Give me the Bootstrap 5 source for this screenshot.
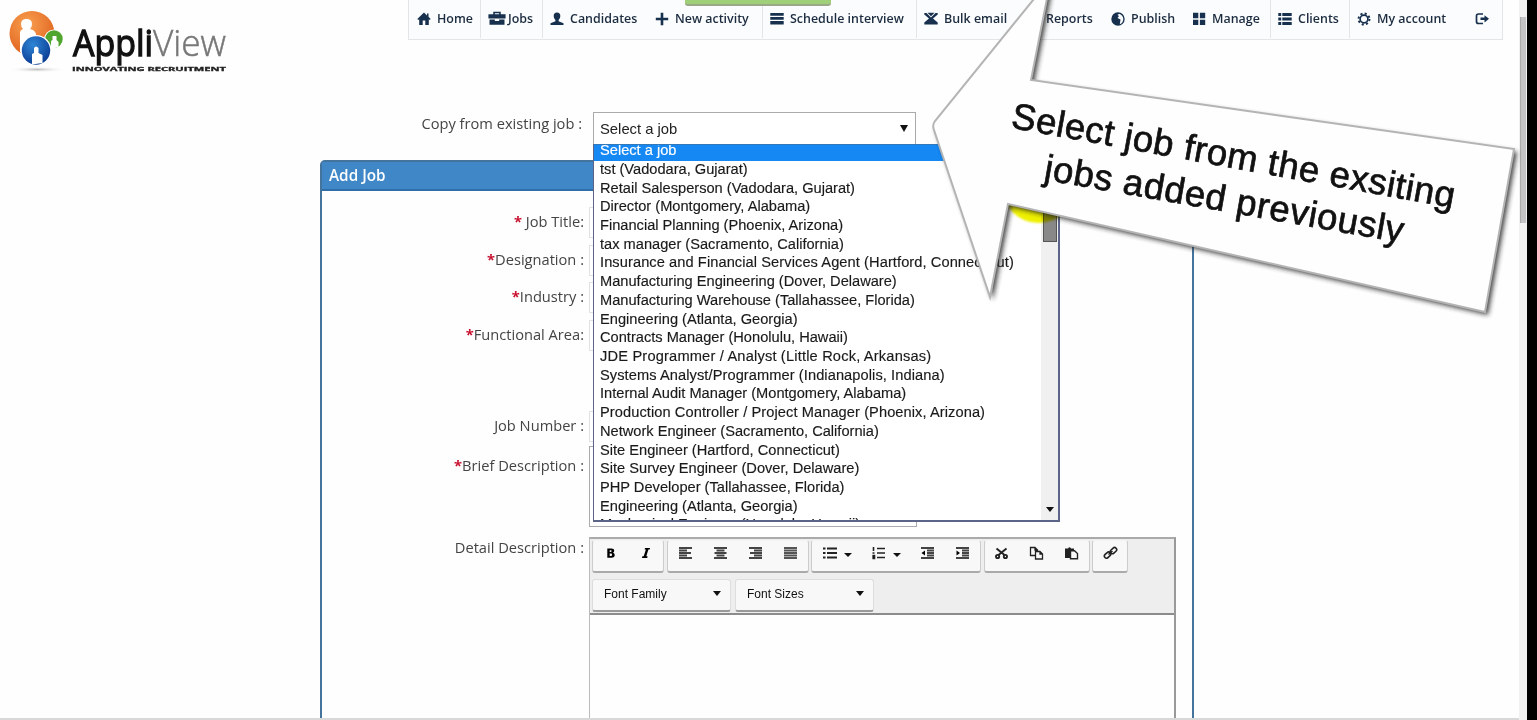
<!DOCTYPE html>
<html lang="en">
<head>
<meta charset="utf-8">
<title>AppliView - Add Job</title>
<meta name="viewport" content="width=device-width, initial-scale=1">
<link href="https://cdn.jsdelivr.net/npm/bootstrap@5.3.0/dist/css/bootstrap.min.css" rel="stylesheet">
<style>
body{height:720px;overflow:hidden;background:#fefefe;font-family:"Open Sans","Noto Sans",sans-serif;color:#333}
.page-area{width:1519px;height:720px;overflow:hidden;border-bottom:2px solid #d8d8d8}
.side-scroll{width:8px;background:#f1f1f1;padding:17px 1px 0}
.side-scroll i{display:block;height:206px;background:#c3c3c5;border-left:1px solid #aaa}
.side-edge{width:10px;background:#000}
.top-line{height:112px}
.main-menu{margin-left:408px;width:1095px;height:40px;background:#fbfcfd;border:1px solid #e3e5e8;border-top:0}
.main-menu a{display:flex;align-items:center;flex:none;height:38px;padding-left:7px;font-size:12.45px;font-weight:600;color:#1c2c40;text-decoration:none;white-space:nowrap;border-left:1px solid transparent}
.main-menu a svg{width:14px;height:14px;margin:-1px 6px 0 0;flex:none;fill:#16304d}
.main-menu a svg.broad{width:18px;height:15px;margin-right:2px}
.main-menu a.sep{border-left-color:#e3e5e8}
.brand{left:0;top:0}
.notice-bar{left:685px;top:0;width:146px;height:6px;background:#a0cf7a;border-bottom:2px solid #9aa887;border-radius:0 0 3px 3px}
.label-col{flex:none;text-align:right;font-size:14.65px;line-height:20px;color:#444;white-space:nowrap}
.label-col b{color:#c8102e}
.copy-row{height:48px}
.copy-row .label-col{width:582px;padding-top:1px}
.pick{margin-left:11px;width:323px;height:33px;border:1px solid #aaa;background:#fff;padding:0 7px 0 6px;font:14.8px "Liberation Sans",sans-serif;color:#222}
.arrow{width:0;height:0;border:4px solid transparent;border-top:7px solid #111;border-bottom:0}
.job-panel{margin-left:320px;width:874px;height:600px;border:2px solid #44749c;border-radius:5px 5px 0 0;background:#fefefe}
.job-head{height:29px;background:#3f87c7;border-bottom:2px solid #2f6ea8;color:#fff;font-size:15.3px;font-weight:600;line-height:26px;padding-left:7px}
.job-panel .label-col{width:262px}
.job-row{height:37.6px}
.job-field{margin-left:5px;width:328px;height:31px;border:1px solid #e2e2e2;background:#fff}
.brief{height:81px;border-color:#aaa}
.editor{margin-left:5px;width:587px;height:260px;border:2px solid #999;border-left:1px solid #bbb;border-top-color:#aaa}
.tools{height:76px;background:#eee;border-bottom:2px solid #8c8c8c;padding:1px 2px}
.tool-set{display:flex;height:33px;background:#f8f8f8;border:1px solid #ccc;border-bottom:2px solid #aaa;border-top-color:#f4f4f4;border-radius:3px;padding-bottom:5px}
.tool-set span{width:35px;display:flex;align-items:center;justify-content:center}
.tool-set span.wide{width:49px;gap:7px;padding-left:1px}
.tool-set svg{width:15px;height:14px}
.arrow.sm{border-width:4px;border-top-width:4.5px;border-bottom:0;margin-top:4px}
.font-pick{height:33px;background:#f8f8f8;border:1px solid #ddd;border-bottom:2px solid #999;border-radius:3px;padding:0 9px 2px 11px;font:12px "Liberation Sans",sans-serif;color:#111}
.font-pick .arrow{border-width:4.5px;border-top-width:5px;border-bottom:0}
.job-menu{left:593px;top:144px;width:467px;height:378px;border:1px solid #5c6488;border-right-width:2px;border-bottom-width:2px;border-top:1px solid #3478b8;background:#fff;overflow:hidden}
.job-menu ul{margin:-4px 0 0;width:446px;font:14.63px/18.72px "Liberation Sans",sans-serif;color:#1a1a1a;-webkit-text-stroke:.15px;flex:none}
.job-menu li{padding-left:6px;white-space:nowrap;height:18.72px}
.job-menu li.on{background:#1688f4;color:#fff;height:20px}
.job-menu li.on+li{margin-top:-1.2px}
.job-menu li.loose{letter-spacing:.08px}
.job-menu li.looser{letter-spacing:.18px}
.menu-scroll{width:17px;background:#f0f0f0;padding:0 2px}
.menu-scroll i{display:block;width:14px;height:80px;margin-top:17px;background:#888;border:1px solid #555}
.spot{left:1002px;top:150px;width:73px;height:73px;border-radius:50%;background:#eef000;mix-blend-mode:multiply;filter:blur(1px)}
.callout{left:900px;top:0}
</style>
</head>
<body class="position-relative">
<svg width="0" height="0" class="position-absolute">
<symbol id="home" viewBox="0 0 14 14"><path d="M7 .5 .3 7l1 1 .9-.8V13h3.500V8.500h2.600V13h3.500V7.200l.9.800 1-1L11.500 4.700V1.500H10v1.900z"/></symbol>
<symbol id="case" viewBox="0 0 16 14"><path d="M4.500 3V.8h7V3H16v4H0V3zm1.500 0h4V2H6zM1 8h5v1.300h4V8h5v4.800H1z"/></symbol>
<symbol id="user" viewBox="0 0 14 14"><path d="M7 .5c2.300 0 3.300 1.500 3.300 3.300S9.600 7 8.600 7.900v1.400l4.900 1.900V13H.5v-1.800l4.900-1.900V7.900C4.400 7 3.700 5.600 3.700 3.800S4.700.5 7 .5z"/></symbol>
<symbol id="plus" viewBox="0 0 14 14"><path d="M5.700.8h2.600v4.900h4.900v2.600H8.300v4.900H5.700V8.300H.8V5.700h4.900z"/></symbol>
<symbol id="rows" viewBox="0 0 14 14"><path d="M.3 1h13.400v2.700H.3zm0 4h13.400v2.700H.3zm0 4h13.400v3.500H.3z"/></symbol>
<symbol id="mail" viewBox="0 0 14 14"><path d="M.3 1h2.200L7 5.500 11.500 1h2.200v1.500L9 6.600l4.700 3.900v2H.3v-2L5 6.600.3 2.500zM3.500.8h7L7 4.200z"/></symbol>
<symbol id="chart" viewBox="0 0 14 14"><path d="M1 7h3v6H1zm5-4h3v10H6zm5-2h3v12h-3z"/></symbol>
<symbol id="globe" viewBox="0 0 14 14"><path fill-rule="evenodd" d="M7 .3a6.700 6.700 0 1 1 0 13.400A6.700 6.700 0 0 1 7 .3zM8 1.700 6.500 3l1.500 1-1.500 2 3 1.500-.7 4.700C11 11.500 12.300 9.500 12.300 7S10.500 2.200 8 1.700z"/></symbol>
<symbol id="grid" viewBox="0 0 14 14"><path d="M1 .8h5.300v5.400H1zm6.900 0h5.300v5.400H7.900zM1 7.700h5.300v5.400H1zm6.900 0h5.300v5.400H7.900z"/></symbol>
<symbol id="list" viewBox="0 0 14 14"><path d="M.3 1h2.900v3H.3zm4 0h9.400v3H4.300zm-4 4.500h2.900v3H.3zm4 0h9.400v3H4.300zM.3 10h2.900v3H.3zm4 0h9.400v3H4.300z"/></symbol>
<symbol id="gear" viewBox="0 0 14 14"><g fill="none" stroke="#16304d"><circle cx="7" cy="7" r="3.900" stroke-width="1.700"/><circle cx="7" cy="7" r="5.500" stroke-width="1.900" stroke-dasharray="2.100 2.220"/></g></symbol>
<symbol id="exit" viewBox="0 0 14 14"><path d="M8 2H3.500Q1.500 2 1.500 4v5.500q0 2 2 2H8" fill="none" stroke="#16304d" stroke-width="1.700"/><path d="M5.500 5.600h4V3.200L14 6.800l-4.500 3.600V8h-4z"/></symbol>
</svg>

<div class="d-flex h-100">
<div class="page-area">
  <header class="top-line">
    <nav class="main-menu d-flex" id="menu">
      <a href="#" style="width:71px"><svg><use href="#home"/></svg>Home</a>
      <a href="#" class="sep" style="width:62px"><svg class="broad"><use href="#case"/></svg>Jobs</a>
      <a href="#" class="sep" style="width:105px"><svg><use href="#user"/></svg>Candidates</a>
      <a href="#" style="width:115px"><svg><use href="#plus"/></svg>New activity</a>
      <a href="#" class="sep" style="width:154px"><svg><use href="#rows"/></svg>Schedule interview</a>
      <a href="#" class="sep" style="width:102px"><svg><use href="#mail"/></svg>Bulk email</a>
      <a href="#" style="width:85px"><svg><use href="#chart"/></svg>Reports</a>
      <a href="#" style="width:81px"><svg><use href="#globe"/></svg>Publish</a>
      <a href="#" style="width:86px"><svg><use href="#grid"/></svg>Manage</a>
      <a href="#" class="sep" style="width:79px"><svg><use href="#list"/></svg>Clients</a>
      <a href="#" class="sep" style="width:118px"><svg><use href="#gear"/></svg>My account</a>
      <a href="#" aria-label="Log out"><svg><use href="#exit"/></svg></a>
    </nav>
  </header>

  <div class="copy-row d-flex">
    <div class="label-col">Copy from existing job :</div>
    <div class="pick d-flex align-items-center justify-content-between">Select a job<i class="arrow"></i></div>
  </div>

  <section class="job-panel">
    <div class="job-head mb-3">Add Job</div>
    <div class="job-row d-flex"><div class="label-col pt-1"><b>*</b> Job Title:</div><div class="job-field"></div></div>
    <div class="job-row d-flex"><div class="label-col pt-1"><b>*</b>Designation :</div><div class="job-field"></div></div>
    <div class="job-row d-flex"><div class="label-col pt-1"><b>*</b>Industry :</div><div class="job-field"></div></div>
    <div class="d-flex" style="height:91px"><div class="label-col pt-1"><b>*</b>Functional Area:</div><div class="job-field"></div></div>
    <div class="d-flex" style="height:35px"><div class="label-col pt-1">Job Number :</div><div class="job-field"></div></div>
    <div class="d-flex" style="height:91px"><div class="label-col" style="padding-top:9px"><b>*</b>Brief Description :</div><div class="job-field brief"></div></div>
    <div class="d-flex"><div class="label-col">Detail Description :</div>
      <div class="editor">
        <div class="tools">
          <div class="d-flex" style="gap:2.5px">
            <div class="tool-set">
              <span><svg viewBox="0 0 15 14"><path d="M4.300 2.500h3.900q3 0 3 2.400-.1 1.300-1.200 1.800 1.700.5 1.700 2.400 0 2.700-3.200 2.700h-4.200zM6.700 4.300v1.600h1q1 0 1-.8t-1-.8zm0 3.200v2.400h1.300q1.100 0 1.100-1.200t-1.100-1.200z" fill-rule="evenodd"/></svg></span>
              <span><svg viewBox="0 0 15 14"><path d="M7 2h5L11.700 3.600h-1.300L8.300 10.300h1.300L9.200 12H4L4.300 10.300h1.400L7.900 3.600H6.600z"/></svg></span>
            </div>
            <div class="tool-set">
              <span><svg viewBox="0 0 15 14" stroke="#444" stroke-width="1.900"><path d="M1 2h13M1 4.500h8M1 7h12M1 9.500h8M1 12h13"/></svg></span>
              <span><svg viewBox="0 0 15 14" stroke="#444" stroke-width="1.900"><path d="M1 2h13M3.500 4.500h8M1.500 7h12M3.500 9.500h8M1 12h13"/></svg></span>
              <span><svg viewBox="0 0 15 14" stroke="#444" stroke-width="1.900"><path d="M1 2h13M6 4.500h8M2 7h12M6 9.500h8M1 12h13"/></svg></span>
              <span><svg viewBox="0 0 15 14" stroke="#555" stroke-width="2.100"><path d="M1 2h13M1 4.500h13M1 7h13M1 9.500h13M1 12h13"/></svg></span>
            </div>
            <div class="tool-set">
              <span class="wide"><svg viewBox="0 0 15 14" stroke="#222" stroke-width="1.800"><path d="M1 2.500h2.500M5 2.500h10M1 7h2.500M5 7h10M1 11.500h2.500M5 11.500h10"/></svg><i class="arrow sm"></i></span>
              <span class="wide"><svg viewBox="0 0 15 14" stroke="#222" stroke-width="1.600"><path d="M2.500 1v4M1.500 7h2M1.500 9.500h2v3h-2M6 2.500h8M6 7h8M6 11.500h8"/></svg><i class="arrow sm"></i></span>
              <span><svg viewBox="0 0 15 14" stroke="#444" stroke-width="2"><path d="M1 2h13M7 4.500h7M7 7h7M7 9.500h7M1 12h13"/><path d="M5 4.500v5L1.500 7z" stroke="none"/></svg></span>
              <span><svg viewBox="0 0 15 14" stroke="#444" stroke-width="2"><path d="M1 2h13M7 4.500h7M7 7h7M7 9.500h7M1 12h13"/><path d="M1.500 4.500v5L5 7z" stroke="none"/></svg></span>
            </div>
            <div class="tool-set">
              <span style="width:34px"><svg viewBox="0 0 15 14" fill="none" stroke="#222" stroke-width="1.900"><path d="M2.500 2.500l8 6.500M12.500 2.500 4.500 9"/><circle cx="3.600" cy="10.500" r="1.600"/><circle cx="11.400" cy="10.500" r="1.600"/></svg></span>
              <span><svg viewBox="0 0 15 14" fill="none" stroke="#222" stroke-width="1.300"><path d="M6 9.500H1.500v-8H6L8.500 4v1M6 1.500V4h2.500M6.500 5.500H11l2.500 2.500v5h-7zM11 5.500V8h2.500"/></svg></span>
              <span><svg viewBox="0 0 15 14"><path d="M1 2.500h3Q5.500 0 7 2.500h3V5H6v7H1z" fill="#222"/><path d="M6.500 4.700h4L13.500 7.500v5.200h-7z" fill="#f8f8f8" stroke="#222" stroke-width="1.400"/></svg></span>
            </div>
            <div class="tool-set">
              <span style="width:34px"><svg viewBox="0 0 15 14" fill="none" stroke="#222" stroke-width="1.600"><rect x="1" y="7" width="7" height="4.200" rx="2.100" transform="rotate(-42 4.500 9)"/><rect x="7" y="2.500" width="7" height="4.200" rx="2.100" transform="rotate(-42 10.500 4.600)"/><path d="M5.500 8.500l4-3.500"/></svg></span>
            </div>
          </div>
          <div class="d-flex gap-1" style="margin-top:6px">
            <div class="font-pick d-flex align-items-center justify-content-between" style="width:139px">Font Family<i class="arrow"></i></div>
            <div class="font-pick d-flex align-items-center justify-content-between" style="width:139px">Font Sizes<i class="arrow"></i></div>
          </div>
        </div>
      </div>
    </div>
  </section>
</div>
<div class="side-scroll"><i></i></div>
<div class="side-edge"></div>
</div>

<div class="notice-bar position-absolute"></div>
<svg class="brand position-absolute" width="235" height="80">
  <defs>
    <radialGradient id="or" cx=".4" cy=".3" r=".8"><stop offset="0" stop-color="#f8a050"/><stop offset="1" stop-color="#dd5a18"/></radialGradient>
    <radialGradient id="bl" cx=".4" cy=".3" r=".8"><stop offset="0" stop-color="#2f86d6"/><stop offset="1" stop-color="#06348c"/></radialGradient>
    <radialGradient id="sh"><stop offset="0" stop-color="#bbb"/><stop offset="1" stop-color="#fff" stop-opacity="0"/></radialGradient>
  </defs>
  <ellipse cx="37" cy="69.500" rx="29" ry="3" fill="url(#sh)"/>
  <circle cx="32" cy="33.500" r="22.500" fill="url(#or)"/>
  <path d="M20 52V33q0-3 3-4-2-2-2-5 0-5 5.500-5t5.500 5q0 3-2 5 5 1 6 5v19z" fill="#fff"/>
  <circle cx="54" cy="39.500" r="10" fill="#fff"/><circle cx="54" cy="39" r="8.700" fill="#4fa52e"/>
  <path d="M51 49v-8l1.500-1v-4h4v4l2 2v5z" fill="#fff"/>
  <circle cx="36" cy="50.500" r="15.500" fill="#fff"/><circle cx="36" cy="50.500" r="14.200" fill="url(#bl)"/>
  <path d="M32 64.500V54l2-1v-5q2-3 4.500 0v5l4 2v8z" fill="#fff"/>
  <g font-family="Open Sans,sans-serif" font-size="36.500">
    <text x="73" y="56" fill="#111" stroke="#111" stroke-width="1.300" textLength="80" lengthAdjust="spacingAndGlyphs">Appli</text>
    <text x="153" y="56" fill="#777" stroke="#777" stroke-width=".5" font-weight="300" textLength="73" lengthAdjust="spacingAndGlyphs">View</text>
    <text x="72" y="71" font-size="5.500" font-weight="700" fill="#222" stroke="#222" stroke-width=".3" textLength="154" lengthAdjust="spacingAndGlyphs">INNOVATING RECRUITMENT</text>
  </g>
</svg>

<div class="job-menu position-absolute d-flex justify-content-between">
  <ul class="list-unstyled">
    <li class="on">Select a job</li>
    <li>tst (Vadodara, Gujarat)</li>
    <li>Retail Salesperson (Vadodara, Gujarat)</li>
    <li>Director (Montgomery, Alabama)</li>
    <li>Financial Planning (Phoenix, Arizona)</li>
    <li>tax manager (Sacramento, California)</li>
    <li class="loose">Insurance and Financial Services Agent (Hartford, Connecticut)</li>
    <li>Manufacturing Engineering (Dover, Delaware)</li>
    <li>Manufacturing Warehouse (Tallahassee, Florida)</li>
    <li>Engineering (Atlanta, Georgia)</li>
    <li>Contracts Manager (Honolulu, Hawaii)</li>
    <li class="looser">JDE Programmer / Analyst (Little Rock, Arkansas)</li>
    <li class="loose">Systems Analyst/Programmer (Indianapolis, Indiana)</li>
    <li>Internal Audit Manager (Montgomery, Alabama)</li>
    <li class="loose">Production Controller / Project Manager (Phoenix, Arizona)</li>
    <li>Network Engineer (Sacramento, California)</li>
    <li>Site Engineer (Hartford, Connecticut)</li>
    <li>Site Survey Engineer (Dover, Delaware)</li>
    <li>PHP Developer (Tallahassee, Florida)</li>
    <li>Engineering (Atlanta, Georgia)</li>
    <li>Mechanical Engineer (Honolulu, Hawaii)</li>
  </ul>
  <div class="menu-scroll d-flex flex-column justify-content-between align-items-center pb-2"><i></i><b class="arrow" style="border-top-width:5px"></b></div>
</div>

<div class="spot position-absolute"></div>
<svg class="callout position-absolute" width="637" height="340" viewBox="900 0 637 340">
  <defs><filter id="soft" x="-5%" y="-5%" width="112%" height="115%"><feGaussianBlur stdDeviation="2.500"/></filter></defs>
  <path d="M1051-22 1031 80 1514 149 1485 312 1008 204 990 297 934 130Q932 125 935 121z" transform="translate(3 3)" fill="#222" opacity=".85" filter="url(#soft)"/>
  <path d="M1051-22 1031 80 1514 149 1485 312 1008 204 990 297 934 130Q932 125 935 121z" fill="#fefefe" stroke="#b4b4b4" stroke-width="2"/>
  <g font-family="Liberation Sans,Arial,sans-serif" font-size="36.500" fill="#111" stroke="#111" stroke-width=".7">
    <text transform="translate(1010 127.500) rotate(10.300)" textLength="450">Select job from the exsiting</text>
    <text transform="translate(1043 179.500) rotate(10)" textLength="364">jobs added previously</text>
  </g>
</svg>
</body>
</html>
